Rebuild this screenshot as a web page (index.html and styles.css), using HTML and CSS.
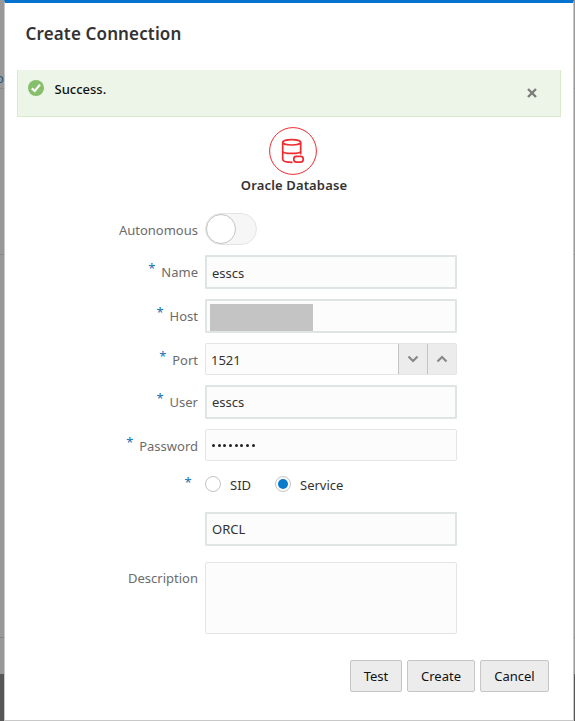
FILE: index.html
```html
<!DOCTYPE html>
<html lang="en">
<head>
<meta charset="utf-8">
<title>Create Connection</title>
<link rel="stylesheet" href="styles.css">
</head>
<body>
<div class="backdrop"><span class="behind">o</span></div>
<main class="dialog">
  <h1><span>Create Connection</span></h1>
  <div class="message">
    <svg class="ok" viewBox="0 0 16 16"><circle cx="8" cy="8" r="8" fill="#86be6b"/><path d="M3.8 8.4 6.8 11 12 4.6" fill="none" stroke="#fff" stroke-width="2.2"/></svg>
    <span class="success">Success.</span>
    <svg class="close" viewBox="0 0 10 10"><path d="M1 1 9 9M9 1 1 9" fill="none" stroke="#7c7c7c" stroke-width="2.4"/></svg>
  </div>
  <section class="type">
    <svg class="db" viewBox="0 0 48 48" fill="none" stroke="#ed2b30">
      <circle cx="24" cy="24" r="23.4"/>
      <g stroke-width="1.7">
        <ellipse cx="22.7" cy="15.3" rx="9" ry="2.7"/>
        <path d="M13.7 15.5V32.3C13.7 34.4 18 35.4 23.5 35.4M31.7 15.5V27.5M13.7 24.2C13.7 27.2 31.7 27.2 31.7 24.2"/>
        <rect x="24.8" y="29.4" width="9.4" height="5.8" rx="2.6"/>
      </g>
    </svg>
    <strong>Oracle Database</strong>
  </section>
  <form class="form">
    <div class="row"><label>Autonomous</label><div class="toggle"><i></i></div></div>
    <div class="row up"><label><b>*</b>Name</label><div class="field thick">esscs</div></div>
    <div class="row up"><label><b>*</b>Host</label><div class="field thick host"><i class="mask"></i></div></div>
    <div class="row"><label><b>*</b>Port</label><div class="field port"><span>1521</span>
      <i class="step"><svg viewBox="0 0 12 8"><path d="M1.5 1.5 6 6 10.5 1.5"/></svg></i>
      <i class="step"><svg viewBox="0 0 12 8"><path d="M1.5 6.5 6 2 10.5 6.5"/></svg></i></div></div>
    <div class="row up"><label><b>*</b>User</label><div class="field thick raised">esscs</div></div>
    <div class="row"><label><b>*</b>Password</label><div class="field dots"><i></i><i></i><i></i><i></i><i></i><i></i><i></i><i></i></div></div>
    <div class="row radios"><label><b>*</b></label><div class="choices"><i class="radio"></i><span class="sid">SID</span><i class="radio on"></i><span>Service</span></div></div>
    <div class="row"><label></label><div class="field thick raised">ORCL</div></div>
    <div class="row desc"><label>Description</label><div class="field area"></div></div>
  </form>
  <footer>
    <button class="test">Test</button><button class="create">Create</button><button class="cancel">Cancel</button>
  </footer>
</main>
</body>
</html>
```
FILE: styles.css
```css
* { box-sizing: border-box; }
body {
  margin: 0;
  width: 575px;
  height: 721px;
  display: flex;
  overflow: hidden;
  background: linear-gradient(#999896 0 88px, #8a8988 88px 89px, #999896 89px 254px, #8a8988 254px 255px, #999896 255px 637px, #858483 637px 638px, #999896 638px 674px, #575655 674px);
  font-family: "Noto Sans", "Open Sans", sans-serif;
  font-size: 13px;
  color: #333;
}
.backdrop { width: 4px; overflow: hidden; padding-top: 69px; }
.behind { display: block; margin-left: -4px; color: #245a82; line-height: 18px; }
.dialog {
  width: 570px;
  height: 721px;
  background: #fff;
  border: 1px solid #c8c8c8;
  border-top: 3px solid #0572ce;
  display: flex;
  flex-direction: column;
}
h1 { margin: 0; height: 67px; padding: 18px 0 0 20.5px; font-size: 17px; line-height: 26px; font-weight: 600; letter-spacing: 0.14px; color: #333; }
.message {
  margin-left: 12px;
  width: 544px;
  height: 47px;
  background: #ecf5e8;
  border: 1px solid #d8e9cc;
  border-top: 0;
  display: flex;
  align-items: flex-start;
}
.ok { width: 16px; height: 16px; margin: 10px 0 0 10px; }
.success { margin: 9px 0 0 10.5px; font-weight: 500; color: #111; line-height: 20px; width: 100px; }
.close { width: 10px; height: 10px; margin: 18px 23px 0 auto; }
.type { height: 96px; padding: 10px 0 0 12px; width: 564px; display: flex; flex-direction: column; align-items: center; }
.db { width: 48px; height: 48px; }
.type strong { font-size: 13px; font-weight: 600; line-height: 20px; letter-spacing: 0.15px; margin-left: 2px; }
.form { display: flex; flex-direction: column; gap: 10px; margin: 0; }
.row { display: flex; }
label { width: 193px; margin-right: 7px; display: flex; justify-content: flex-end; align-items: center; color: #6c6c6c; padding-top: 1px; line-height: 20px; white-space: nowrap; }
label b { align-self: flex-start; width: 13px; font-weight: 400; font-size: 13px; line-height: 20px; color: #1470b0; margin-top: 2px; }
.up label { padding: 0 0 1px; }
.up label b { margin-top: 3px; }
.toggle { width: 52px; height: 32px; border: 1px solid #e4e4e4; border-radius: 16px; background: #f6f6f6; }
.toggle i { display: block; width: 30px; height: 30px; border-radius: 50%; border: 1px solid #c4c4c4; background: #fff; }
.field { width: 252px; height: 32px; border: 1px solid #e3e6e6; border-radius: 2px; background: #fcfcfc; display: flex; align-items: center; padding: 1px 0 0 6px; }
.thick { height: 34px; border: 2px solid #dfe4e4; border-radius: 1px; padding-left: 5px; }
.raised { padding: 0 0 1px 5px; }
.host { padding: 3px 0 0 3px; }
.mask { width: 103px; height: 27px; background: #c4c4c4; }
.port { padding: 0; }
.port span { flex: 1; padding: 1px 0 0 5px; }
.step { width: 29px; height: 30px; background: #ececec; border-left: 1px solid #c4c4c4; display: grid; place-items: center; }
.step svg { width: 12px; height: 8px; fill: none; stroke: #888; stroke-width: 2.2; }
.dots { gap: 2.7px; padding-left: 6px; }
.dots i { width: 3px; height: 3px; border-radius: 50%; background: #222; }
.radios { height: 31px; }
.radios label b { width: 13.5px; margin-top: 0; }
.choices { display: flex; align-items: center; padding-bottom: 5px; }
.choices span { margin: 2px 0 0 9px; line-height: 20px; }
.choices .sid { width: 45px; }
.radio { width: 16px; height: 16px; border: 1px solid #c4c4c4; border-radius: 50%; display: grid; place-items: center; }
.radio.on::after { content: ""; width: 10px; height: 10px; border-radius: 50%; background: #0a7bcc; }
.desc { margin-top: 6px; height: 72px; align-items: flex-start; }
.desc label { padding-top: 6px; }
.area { height: 72px; }
footer { margin: 26px 24px 0 0; display: flex; justify-content: flex-end; gap: 5px; }
button { height: 32px; border: 1px solid #c6c6c6; border-radius: 2px; background: #ececec; font: inherit; color: #111; padding: 0; }
.test { width: 52px; }
.create { width: 68px; }
.cancel { width: 69px; }
```
